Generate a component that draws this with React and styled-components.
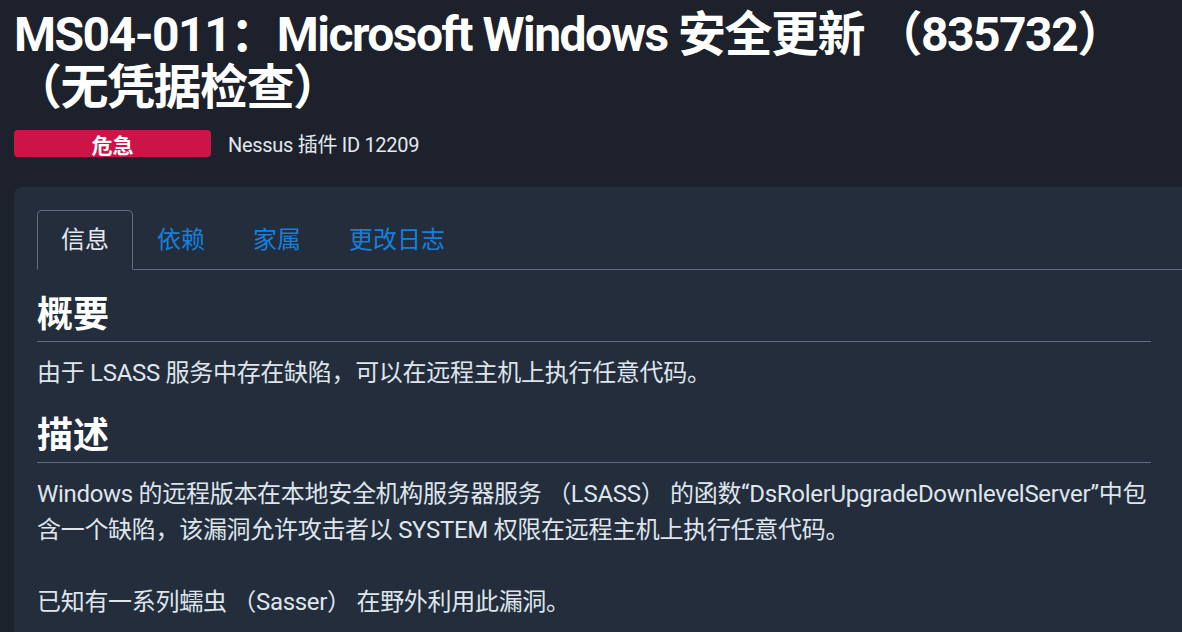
import React, { useState } from "react";
import styled, { createGlobalStyle } from "styled-components";

const GlobalStyle = createGlobalStyle`
  html, body {
    margin: 0;
    padding: 0;
    background: #1c212b;
    overflow: hidden;
  }
  body {
    font-family: Roboto, "Noto Sans CJK SC", sans-serif;
    color: #dfe5ec;
  }
`;

const Page = styled.div`
  padding: 8px 0 0 14px;
`;

const Title = styled.h1`
  margin: 0;
  font-size: 48px;
  line-height: 53px;
  font-weight: 700;
  letter-spacing: -1.5px;
  color: #ffffff;
  padding-right: 20px;
`;

const MetaRow = styled.div`
  display: flex;
  align-items: center;
  gap: 17px;
  margin-top: 15px;
`;

const SeverityBadge = styled.span`
  display: flex;
  align-items: center;
  justify-content: center;
  width: 197px;
  height: 27px;
  border-radius: 4px;
  background: #cc1447;
  color: #ffffff;
  font-size: 21px;
  font-weight: 700;
`;

const PluginId = styled.span`
  font-size: 20px;
  letter-spacing: -0.3px;
  color: #e4e9ef;
`;

const Panel = styled.section`
  margin-top: 29px;
  margin-right: -20px;
  padding: 23px 51px 40px 23px;
  background: #242d3c;
  border-radius: 8px 8px 0 0;
`;

const TabList = styled.div`
  display: flex;
  margin-right: -51px;
  border-bottom: 1px solid #5f6d82;
`;

const Tab = styled.button`
  margin: 0 0 -1px;
  padding: 11px 23px;
  font-family: inherit;
  font-size: 24px;
  line-height: 36px;
  background: ${({ $active }) => ($active ? "#242d3c" : "transparent")};
  color: ${({ $active }) => ($active ? "#e4e9ef" : "#1580dc")};
  border: 1px solid ${({ $active }) => ($active ? "#5f6d82" : "transparent")};
  border-bottom-color: ${({ $active }) => ($active ? "#242d3c" : "transparent")};
  border-radius: 5px 5px 0 0;
  cursor: pointer;
`;

const SectionTitle = styled.h2`
  margin: 24px 0 0;
  padding-bottom: 4px;
  font-size: 36px;
  line-height: 43px;
  font-weight: 700;
  color: #ffffff;
  border-bottom: 1px solid #5f6d82;
`;

const Paragraph = styled.p`
  margin: 13px 0 0;
  font-size: 24px;
  line-height: 36px;
  letter-spacing: -0.3px;
  color: #dfe5ec;

  & + & {
    margin-top: 36px;
  }
`;

const Section = styled.div`
  & + & {
    margin-top: 23px;
  }
`;

const tabs = ["信息", "依赖", "家属", "更改日志"];

export default function App() {
  const [active, setActive] = useState(0);

  return (
    <Page>
      <GlobalStyle />
      <Title>MS04-011：Microsoft Windows 安全更新 （835732） （无凭据检查）</Title>
      <MetaRow>
        <SeverityBadge>危急</SeverityBadge>
        <PluginId>Nessus 插件 ID 12209</PluginId>
      </MetaRow>
      <Panel>
        <TabList>
          {tabs.map((t, i) => (
            <Tab key={t} $active={i === active} onClick={() => setActive(i)}>
              {t}
            </Tab>
          ))}
        </TabList>
        <Section>
          <SectionTitle>概要</SectionTitle>
          <Paragraph>由于 LSASS 服务中存在缺陷，可以在远程主机上执行任意代码。</Paragraph>
        </Section>
        <Section>
          <SectionTitle>描述</SectionTitle>
          <Paragraph>
            Windows 的远程版本在本地安全机构服务器服务 （LSASS） 的函数“DsRolerUpgradeDownlevelServer”中包含一个缺陷，该漏洞允许攻击者以 SYSTEM 权限在远程主机上执行任意代码。
          </Paragraph>
          <Paragraph>已知有一系列蠕虫 （Sasser） 在野外利用此漏洞。</Paragraph>
        </Section>
      </Panel>
    </Page>
  );
}
